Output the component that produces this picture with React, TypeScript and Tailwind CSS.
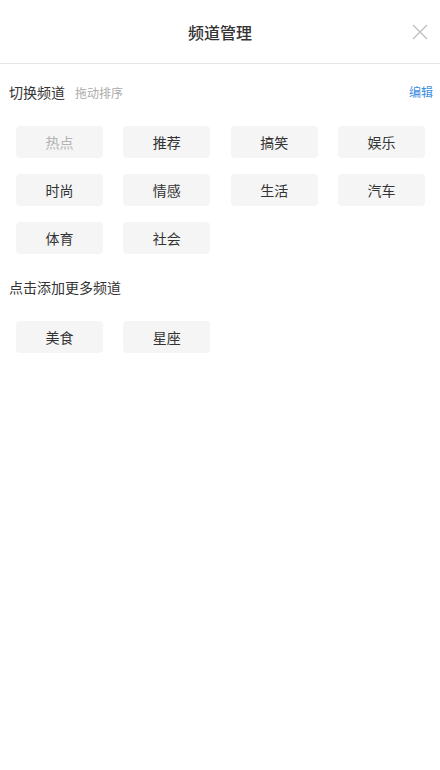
const myChannels = ["热点", "推荐", "搞笑", "娱乐", "时尚", "情感", "生活", "汽车", "体育", "社会"];
const moreChannels = ["美食", "星座"];

function Chip({ label, muted }: { label: string; muted?: boolean }) {
  return (
    <div
      className={`h-[32px] rounded-[4px] bg-[#f5f5f5] flex items-center justify-center text-[14px] ${
        muted ? "text-[#b3b3b3]" : "text-[#333]"
      }`}
    >
      {label}
    </div>
  );
}

export default function App() {
  return (
    <div
      className="w-[440px] h-[770px] bg-white"
      style={{ fontFamily: '"Noto Sans CJK SC", "Noto Sans", sans-serif' }}
    >
      <header className="relative h-[64px] border-b border-[#e5e5e5] flex items-center justify-center">
        <h1 className="text-[16px] font-medium text-[#333]">频道管理</h1>
        <button className="absolute right-[12px] top-[24px] w-[16px] h-[16px]">
          <svg viewBox="0 0 16 16" className="w-[16px] h-[16px]" stroke="#bdbdbd" strokeWidth="1.2" fill="none">
            <path d="M1 1 L15 15 M15 1 L1 15" />
          </svg>
        </button>
      </header>

      <div className="flex items-center justify-between pl-[9px] pr-[7px] h-[56px]">
        <div className="flex items-baseline gap-[10px]">
          <span className="text-[14px] text-[#333]">切换频道</span>
          <span className="text-[12px] text-[#aaa]">拖动排序</span>
        </div>
        <span className="text-[12px] text-[#3d8ee0]">编辑</span>
      </div>

      <div className="grid grid-cols-4 gap-x-[20.3px] gap-y-[16px] pl-[16px] pr-[15px] pt-[6px]">
        {myChannels.map((c, i) => (
          <Chip key={c} label={c} muted={i === 0} />
        ))}
      </div>

      <div className="pl-[9px] h-[66px] flex items-center text-[14px] text-[#333]">点击添加更多频道</div>

      <div className="grid grid-cols-4 gap-x-[20.3px] pl-[16px] pr-[15px] pt-[1px]">
        {moreChannels.map((c) => (
          <Chip key={c} label={c} />
        ))}
      </div>
    </div>
  );
}
